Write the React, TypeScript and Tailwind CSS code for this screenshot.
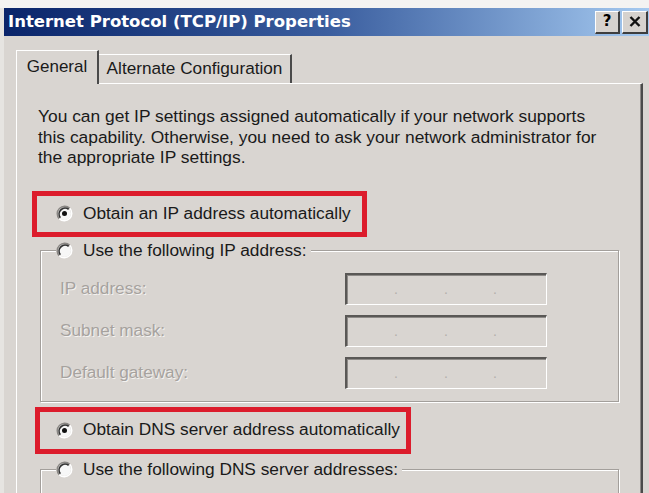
import React from "react";

function Radio({ checked = false }: { checked?: boolean }) {
  return (
    <svg width="17" height="17" viewBox="0 0 17 17" className="shrink-0">
      <circle cx="8.5" cy="8.5" r="6.5" fill="#f7f7f7" />
      <path d="M3.2 13.8 A7.5 7.5 0 0 1 13.8 3.2" fill="none" stroke="#8a8784" strokeWidth="1.4" />
      <path d="M4.3 12.7 A6 6 0 0 1 12.7 4.3" fill="none" stroke="#333" strokeWidth="1.7" />
      <path d="M13.8 3.2 A7.5 7.5 0 0 1 3.2 13.8" fill="none" stroke="#ffffff" strokeWidth="1.4" />
      {checked && <circle cx="8.5" cy="8.5" r="2.5" fill="#111" />}
    </svg>
  );
}

function IpBox() {
  return (
    <div className="w-[202px] h-[32px] border-t-2 border-l-2 border-t-[#5a5856] border-l-[#5a5856] border-b border-r border-b-white border-r-white shadow-[inset_1px_1px_0_#8d8a87] flex items-end pb-[8px] text-[#b3afab] text-[14px] leading-none">
      <span className="w-[51px] text-right">.</span>
      <span className="w-[50px] text-right">.</span>
      <span className="w-[49px] text-right">.</span>
    </div>
  );
}

function Disabled({ children }: { children: React.ReactNode }) {
  return (
    <span className="text-[#a6a29e] [text-shadow:1px_1px_0_#f4f2f0] text-[17.2px]">{children}</span>
  );
}

export default function App() {
  return (
    <div className="w-[649px] h-[493px] overflow-hidden bg-[#f4f3f2] text-[#1a1a1a] font-['Liberation_Sans',Arial,sans-serif]">
      <div className="h-[8px]" />
      <div className="flex h-[485px]">
        <div className="w-[4px] bg-[#e6e4e1]" />
        <div className="flex-1 flex flex-col bg-[#d9d5d1]">
          {/* Title bar */}
          <div className="h-[28px] shrink-0 flex items-center bg-gradient-to-r from-[#0a246a] via-[#3a5d9e] to-[#a6caf0] pl-[4px] pr-[1px]">
            <span className="font-['DejaVu_Sans',sans-serif] font-bold text-[16.5px] text-white">
              Internet Protocol (TCP/IP) Properties
            </span>
            <div className="ml-auto flex gap-[2px]">
              <div className="w-[25px] h-[23px] bg-[#d6d2ce] border-t border-l border-white border-b-2 border-r-2 border-b-[#3e3e3e] border-r-[#3e3e3e] flex items-center justify-center font-['DejaVu_Sans',sans-serif] font-bold text-[15px] leading-none text-black">
                ?
              </div>
              <div className="w-[26px] h-[23px] bg-[#d6d2ce] border-t border-l border-white border-b-2 border-r-2 border-b-[#3e3e3e] border-r-[#3e3e3e] flex items-center justify-center">
                <svg width="12" height="11" viewBox="0 0 12 11">
                  <path d="M1.5 1 L10.5 10 M10.5 1 L1.5 10" stroke="#111" strokeWidth="2.4" />
                </svg>
              </div>
            </div>
          </div>

          {/* Tabs */}
          <div className="mt-[14px] h-[33px] flex items-end pl-[12px] shrink-0">
            <div className="relative z-10 h-[34px] -mb-[1px] w-[83px] bg-[#d9d5d1] border-t border-l border-white border-r-2 border-r-[#4a4a4a] flex items-center justify-center text-[17px] pb-[2px]">
              General
            </div>
            <div className="h-[29px] w-[193px] border-t border-white border-r-2 border-r-[#4a4a4a] flex items-center justify-center text-[17.2px] whitespace-nowrap">
              Alternate Configuration
            </div>
          </div>

          {/* Panel */}
          <div className="flex-1 ml-[12px] mr-[6px] border-t border-l border-white border-r-2 border-r-[#4a4a4a] shadow-[inset_-1px_0_0_#8d8a87] flex flex-col overflow-hidden">
            <p className="pl-[21px] pt-[22px] text-[17.4px] leading-[20.5px] whitespace-nowrap">
              You can get IP settings assigned automatically if your network supports
              <br />
              this capability. Otherwise, you need to ask your network administrator for
              <br />
              the appropriate IP settings.
            </p>

            <div className="mt-[23px] ml-[15px] w-[335px] h-[46px] border-[5px] border-[#dc1c2c] flex items-center pl-[19px] gap-[10px] shrink-0">
              <Radio checked />
              <span className="text-[17.3px] whitespace-nowrap">Obtain an IP address automatically</span>
            </div>

            <fieldset className="mt-[4px] ml-[23px] w-[579px] border border-[#a39f9b] shadow-[inset_1px_1px_0_#ffffff,1px_1px_0_#ffffff] p-0 shrink-0">
              <legend className="ml-[15px] h-[20px] flex items-center gap-[10px] bg-[#d9d5d1] pr-[4px]">
                <Radio />
                <span className="text-[17.3px] whitespace-nowrap">Use the following IP address:</span>
              </legend>
              <div className="pt-[12px] pb-[12px] pl-[19px] flex flex-col gap-[10px]">
                <div className="flex items-center h-[32px]">
                  <div className="w-[285px]"><Disabled>IP address:</Disabled></div>
                  <IpBox />
                </div>
                <div className="flex items-center h-[32px]">
                  <div className="w-[285px]"><Disabled>Subnet mask:</Disabled></div>
                  <IpBox />
                </div>
                <div className="flex items-center h-[32px]">
                  <div className="w-[285px]"><Disabled>Default gateway:</Disabled></div>
                  <IpBox />
                </div>
              </div>
            </fieldset>

            <div className="mt-[5px] ml-[18px] w-[376px] h-[47px] border-[5px] border-[#dc1c2c] flex items-center pl-[16px] gap-[10px] shrink-0">
              <Radio checked />
              <span className="text-[17.3px] whitespace-nowrap">Obtain DNS server address automatically</span>
            </div>

            <fieldset className="mt-[6px] ml-[23px] w-[579px] h-[80px] border border-[#a39f9b] shadow-[inset_1px_1px_0_#ffffff,1px_1px_0_#ffffff] p-0 shrink-0">
              <legend className="ml-[15px] h-[20px] flex items-center gap-[10px] bg-[#d9d5d1] pr-[4px]">
                <Radio />
                <span className="text-[17.3px] whitespace-nowrap">Use the following DNS server addresses:</span>
              </legend>
            </fieldset>
          </div>
        </div>
      </div>
    </div>
  );
}
